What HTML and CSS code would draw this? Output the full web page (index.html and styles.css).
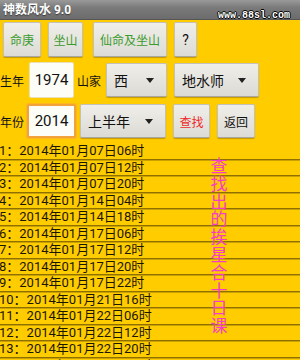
FILE: index.html
```html
<!DOCTYPE html>
<html lang="zh">
<head>
<meta charset="utf-8">
<title>神数风水 9.0</title>
<link rel="stylesheet" href="styles.css">
</head>
<body>
<div class="screen">
  <header class="titlebar">神数风水 9.0</header>
  <div class="watermark">www.88sl.com</div>

  <div class="toolbar">
    <button class="btn btn-green w-mg">命庚</button>
    <button class="btn btn-green w-zs">坐山</button>
    <button class="btn btn-green w-xm">仙命及坐山</button>
    <button class="btn w-q">?</button>
  </div>

  <div class="form-row row-birth">
    <span class="label">生年</span>
    <div class="input w-in1">1974</div>
    <span class="label label-mid">山家</span>
    <div class="spinner w-sp1"><span>西</span><i class="caret"></i></div>
    <div class="spinner w-sp2"><span>地水师</span><i class="caret"></i></div>
  </div>

  <div class="form-row row-year">
    <span class="label">年份</span>
    <div class="input input-focus w-in2">2014</div>
    <div class="spinner w-sp3"><span>上半年</span><i class="caret"></i></div>
    <button class="btn btn-red w-find">查找</button>
    <button class="btn w-back">返回</button>
  </div>

  <ul class="results">
    <li>1：2014年01月07日06时</li>
    <li>2：2014年01月07日12时</li>
    <li>3：2014年01月07日20时</li>
    <li>4：2014年01月14日04时</li>
    <li>5：2014年01月14日18时</li>
    <li>6：2014年01月17日06时</li>
    <li>7：2014年01月17日12时</li>
    <li>8：2014年01月17日20时</li>
    <li>9：2014年01月17日22时</li>
    <li>10：2014年01月21日16时</li>
    <li>11：2014年01月22日06时</li>
    <li>12：2014年01月22日12时</li>
    <li>13：2014年01月22日20时</li>
    <li>14：2014年01月23日06时</li>
  </ul>

  <div class="overlay-note">查找出的挨星合十日课</div>
</div>
</body>
</html>
```

FILE: styles.css
```css
* { box-sizing: border-box; }

html, body {
  margin: 0;
  padding: 0;
}

body {
  background: #ffcc00;
  font-family: Roboto, "Noto Sans CJK SC", sans-serif;
  color: #111;
}

.screen {
  position: relative;
  width: 300px;
  height: 360px;
  overflow: hidden;
  background: #ffcc00;
}

.titlebar {
  height: 20px;
  padding-left: 3px;
  line-height: 20px;
  font-size: 12px;
  font-weight: bold;
  color: #fff;
  text-shadow: 0 1px 1px rgba(0,0,0,.5);
  background: linear-gradient(#9a9a9a, #7a7a7a 40%, #6c6c6c);
  border-bottom: 1px solid #555;
}

.watermark {
  position: absolute;
  top: 11px;
  left: 218px;
  font-family: "Liberation Mono", monospace;
  font-size: 10px;
  font-weight: bold;
  line-height: 10px;
  color: #fff;
  text-shadow: 1px 0 0 #000, -1px 0 0 #000, 0 1px 0 #000, 0 -1px 0 #000;
}

.toolbar {
  display: flex;
  height: 35px;
  margin-top: 2px;
  padding-left: 3px;
}

.btn {
  display: flex;
  align-items: center;
  justify-content: center;
  height: 100%;
  padding: 0;
  font-family: Roboto, "Noto Sans CJK SC", sans-serif;
  font-size: 12px;
  color: #111;
  background: linear-gradient(#f0eee9, #dddbd5);
  border: 1px solid #c3c1ba;
  border-bottom-color: #a9a7a0;
  border-radius: 2px;
  box-shadow: 0 1px 1px rgba(120,90,0,.45);
}

.btn-green { color: #3a9b2e; }
.btn-red { color: #ec2b2b; }

.w-mg { width: 38px; }
.w-zs { width: 35px; margin-left: 7px; }
.w-xm { width: 74px; margin-left: 10px; }
.w-q { width: 23px; margin-left: 7px; font-size: 14px; }

.form-row {
  display: flex;
  align-items: center;
}

.row-birth { height: 36px; margin-top: 5px; }
.row-year { height: 34px; margin-top: 6px; }

.label {
  width: 24px;
  font-size: 12px;
  color: #111;
  white-space: nowrap;
}

.label-mid { margin-left: 3px; }

.input {
  display: flex;
  align-items: center;
  justify-content: center;
  height: 100%;
  font-size: 15px;
  color: #111;
  background: #fdfdf7;
  border: 1px solid #e9dfb8;
  border-radius: 2px;
}

.input-focus {
  border: 2px solid #f2a23a;
  box-shadow: 0 0 1px 1px rgba(255,160,60,.5);
}

.w-in1 { width: 45px; margin-left: 5px; }
.w-in2 { width: 49px; margin-left: 3px; }

.spinner {
  display: flex;
  align-items: center;
  height: 34px;
  padding-left: 7px;
  font-size: 14px;
  color: #111;
  background: linear-gradient(#f0eee9, #dcdad4);
  border: 1px solid #c3c1ba;
  border-bottom-color: #a9a7a0;
  border-radius: 2px;
  box-shadow: 0 1px 1px rgba(120,90,0,.45);
}

.caret {
  width: 0;
  height: 0;
  margin-left: auto;
  margin-right: 12px;
  border-left: 4px solid transparent;
  border-right: 4px solid transparent;
  border-top: 5px solid #222;
}

.w-sp1 { width: 61px; margin-left: 5px; }
.w-sp2 { width: 85px; margin-left: 7px; }
.w-sp3 { width: 86px; margin-left: 4px; }
.w-find { width: 37px; margin-left: 7px; }
.w-back { width: 38px; margin-left: 7px; }

.results {
  list-style: none;
  margin: 5px 0 0;
  padding: 0;
}

.results li {
  height: 16.5px;
  padding-left: 0;
  margin-left: -1px;
  font-size: 13px;
  line-height: 15.5px;
  color: #1b1600;
  white-space: nowrap;
  border-bottom: 1px solid #8e6f00;
  box-shadow: 0 1px 0 #c9a100;
}

.overlay-note {
  position: absolute;
  top: 156px;
  left: 210px;
  width: 18px;
  font-family: "Noto Sans CJK SC", sans-serif;
  font-size: 17px;
  line-height: 17.8px;
  color: #f53bc9;
  text-align: center;
  word-break: break-all;
}
```
